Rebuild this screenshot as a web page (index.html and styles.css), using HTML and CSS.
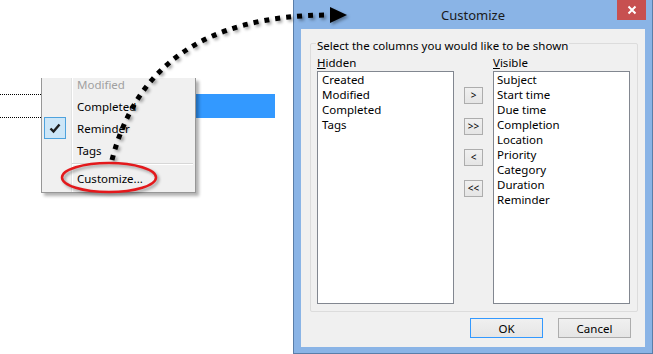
FILE: index.html
```html
<!DOCTYPE html>
<html lang="en">
  <head>
    <meta charset="UTF-8" />
    <title>Customize columns</title>
    <link rel="stylesheet" href="styles.css">
  </head>
  <body>
    <div class="stage">
      <div class="grid-row">
        <div class="grid-focus"></div>
        <div class="grid-selected"></div>
      </div>

      <div class="menu">
        <ul class="menu-list">
          <li class="menu-item disabled"><span class="menu-icon"></span>Modified</li>
          <li class="menu-item"><span class="menu-icon"></span>Completed</li>
          <li class="menu-item">
            <span class="menu-icon checked">
              <svg width="20" height="20" viewBox="0 0 20 20">
                <path d="M5.5 10.5 L8.5 13.5 L14.5 6.5" fill="none" stroke="#1e1e1e" stroke-width="2.4" />
              </svg>
            </span>Reminder
          </li>
          <li class="menu-item"><span class="menu-icon"></span>Tags</li>
          <li class="menu-sep"></li>
          <li class="menu-item"><span class="menu-icon"></span>Customize...</li>
        </ul>
      </div>

      <div class="dialog">
        <div class="titlebar">
          <span class="title">Customize</span>
          <button class="close" aria-label="Close">
            <svg width="10" height="10" viewBox="0 0 10 10">
              <path d="M1.5 1.5 L8.5 8.5 M8.5 1.5 L1.5 8.5" stroke="#fff" stroke-width="2" />
            </svg>
          </button>
        </div>

        <div class="client">
          <fieldset class="group">
            <legend>Select the columns you would like to be shown</legend>
            <div class="columns">
              <label class="col-label"><u>H</u>idden</label>
              <label class="col-label visible-label"><u>V</u>isible</label>

              <ul class="listbox hidden-list">
                <li>Created</li>
                <li>Modified</li>
                <li>Completed</li>
                <li>Tags</li>
              </ul>

              <div class="move-buttons">
                <button class="small-btn">&gt;</button>
                <button class="small-btn">&gt;&gt;</button>
                <button class="small-btn">&lt;</button>
                <button class="small-btn">&lt;&lt;</button>
              </div>

              <ul class="listbox visible-list">
                <li>Subject</li>
                <li>Start time</li>
                <li>Due time</li>
                <li>Completion</li>
                <li>Location</li>
                <li>Priority</li>
                <li>Category</li>
                <li>Duration</li>
                <li>Reminder</li>
              </ul>
            </div>
          </fieldset>

          <div class="footer">
            <button class="btn default">OK</button>
            <button class="btn">Cancel</button>
          </div>
        </div>
      </div>

      <svg class="annotations" width="653" height="354" viewBox="0 0 653 354">
        <g class="shadowed">
          <ellipse cx="109" cy="177.5" rx="47" ry="14.5" fill="none" stroke="#e3191c" stroke-width="2.5" />
          <path d="M112 160 C135 70 200 15 330 15" fill="none" stroke="#000" stroke-width="5" stroke-dasharray="5 6" />
          <polygon points="330,7 347,15 330,23" fill="#000" />
        </g>
      </svg>
    </div>
  </body>
</html>
```

FILE: styles.css
```css
body {
  margin: 0;
  background: #fff;
  font-family: "Noto Sans", sans-serif;
  font-size: 11.5px;
  color: #000;
}

.stage {
  position: relative;
  width: 653px;
  height: 354px;
  overflow: hidden;
}

/* table row behind the popup menu */
.grid-row {
  position: absolute;
  top: 94px;
  left: 0;
  width: 275px;
  height: 24px;
  display: flex;
}

.grid-focus {
  width: 41px;
  border-top: 1px dotted #000;
  border-bottom: 1px dotted #000;
}

.grid-selected {
  flex: 1;
  background: #3399ff;
}

/* context menu */
.menu {
  position: absolute;
  left: 41px;
  top: 78px;
  width: 155px;
  height: 115px;
  box-sizing: border-box;
  border: 1px solid #979797;
  border-top: none;
  background: #f0f0f0
    linear-gradient(to right, transparent 29px, #e2e3e3 29px, #e2e3e3 30px, #fff 30px, #fff 31px, transparent 31px);
  box-shadow: 3px 3px 3px rgba(0, 0, 0, 0.3);
  overflow: hidden;
}

.menu-list {
  list-style: none;
  margin: -5px 0 0;
  padding: 0 2px;
}

.menu-item {
  height: 22px;
  display: flex;
  align-items: center;
}

.menu-item.disabled {
  color: #a0a0a0;
}

.menu-icon {
  width: 22px;
  height: 22px;
  box-sizing: border-box;
  margin-right: 11px;
  display: flex;
  align-items: center;
  justify-content: center;
}

.menu-icon.checked {
  background: #cde6f7;
  border: 1px solid #4ea2dd;
}

.menu-sep {
  height: 6px;
  margin-left: 28px;
  display: flex;
  align-items: center;
}

.menu-sep::after {
  content: "";
  flex: 1;
  border-top: 1px solid #d7d7d7;
  border-bottom: 1px solid #fff;
}

/* dialog window */
.dialog {
  position: absolute;
  left: 293px;
  top: 0;
  width: 360px;
  height: 354px;
  box-sizing: border-box;
  border: 1px solid #5a7ea9;
  border-top: none;
  background: #8ab4e6;
  padding: 0 7px 6px;
  display: flex;
  flex-direction: column;
}

.titlebar {
  position: relative;
  height: 29px;
  display: flex;
  align-items: center;
  justify-content: center;
  font-size: 13px;
  color: #1a1a1a;
}

.close {
  position: absolute;
  top: 0;
  right: -1px;
  width: 29px;
  height: 20px;
  padding: 0;
  border: none;
  background: #c75050;
  display: flex;
  align-items: center;
  justify-content: center;
}

.client {
  flex: 1;
  background: #f0f0f0;
  padding: 3px 7px 0 9px;
  display: flex;
  flex-direction: column;
}

.group {
  margin: 0;
  padding: 1px 7px 7px 6px;
  border: 1px solid #dcdcdc;
  border-radius: 2px;
  min-width: 0;
}

.group legend {
  padding: 6px 1px 0;
  margin-left: -1px;
  line-height: 16px;
}

.columns {
  display: grid;
  grid-template-columns: 137px 19px 137px;
  grid-template-rows: 15px 233px;
  column-gap: 10px;
  row-gap: 1px;
}

.col-label {
  line-height: 15px;
}

.visible-label {
  grid-column: 3;
}

.listbox {
  list-style: none;
  margin: 0;
  padding: 0 4px;
  background: #fff;
  border: 1px solid #828790;
  line-height: 15px;
}

.visible-list {
  padding-left: 3px;
}

.move-buttons {
  display: flex;
  flex-direction: column;
  gap: 14px;
  padding-top: 16px;
}

.small-btn {
  width: 19px;
  height: 17px;
  padding: 0;
  border: 1px solid #adadad;
  background: linear-gradient(#f0f0f0, #e5e5e5);
  font-family: "Noto Sans", sans-serif;
  font-size: 10px;
  line-height: 15px;
  color: #000;
}

.footer {
  display: flex;
  justify-content: flex-end;
  gap: 15px;
  margin-top: 6px;
  padding-right: 7px;
}

.btn {
  width: 73px;
  height: 20px;
  padding: 0;
  border: 1px solid #adadad;
  background: linear-gradient(#f0f0f0, #e5e5e5);
  font-family: "Noto Sans", sans-serif;
  font-size: 11.5px;
  color: #000;
}

.btn.default {
  border-color: #3399ff;
}

/* hand-drawn callout on top */
.annotations {
  position: absolute;
  top: 0;
  left: 0;
  pointer-events: none;
}

.shadowed {
  filter: drop-shadow(2px 2px 1.5px rgba(0, 0, 0, 0.35));
}
```
